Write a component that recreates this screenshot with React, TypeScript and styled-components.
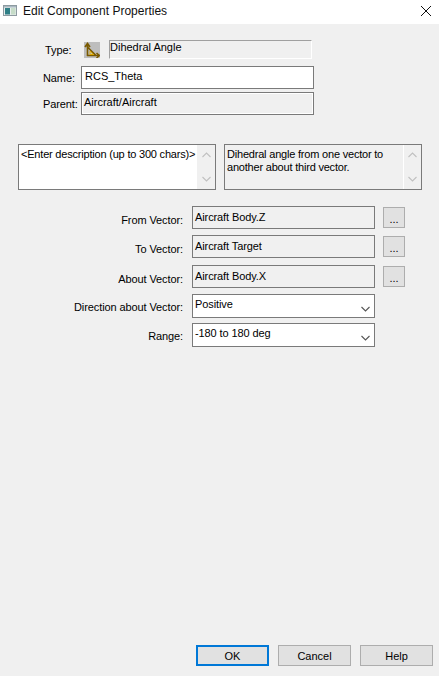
import styled, { createGlobalStyle } from 'styled-components';

const GlobalStyle = createGlobalStyle`
    html, body {
        margin: 0;
        padding: 0;
        background: #f0f0f0;
    }
    * {
        box-sizing: border-box;
    }
`;

const vectorRows = [
    { label: 'From Vector:', value: 'Aircraft Body.Z', gap: 0 },
    { label: 'To Vector:', value: 'Aircraft Target', gap: 6 },
    { label: 'About Vector:', value: 'Aircraft Body.X', gap: 7 },
];

const selectRows = [
    { label: 'Direction about Vector:', value: 'Positive', gap: 6 },
    { label: 'Range:', value: '-180 to 180 deg', gap: 5 },
];

const Chevron = ({ up, color }: { up?: boolean; color: string }) => (
    <svg width="9" height="6" viewBox="0 0 9 6" fill="none">
        <path d={up ? 'M0.5 5 L4.5 1 L8.5 5' : 'M0.5 1 L4.5 5 L8.5 1'} stroke={color} strokeWidth="1.1" />
    </svg>
);

const Scrollbar = ({ $disabled }: { $disabled?: boolean }) => (
    <ScrollTrack $disabled={$disabled}>
        <Chevron up color="#c0c0c0" />
        <Chevron color="#c0c0c0" />
    </ScrollTrack>
);

export default function App() {
    return (
        <>
            <GlobalStyle />
            <Page>
                <TitleBar>
                    <svg width="14" height="11" viewBox="0 0 14 11">
                        <rect x="0.5" y="0.5" width="13" height="10" fill="#e8eeee" stroke="#8d9aa0" />
                        <rect x="1" y="1" width="12" height="1.5" fill="#a9b8c0" />
                        <rect x="2" y="3" width="5" height="6.5" fill="#2f7f86" />
                        <rect x="8" y="3" width="4.5" height="6.5" fill="#c6dcc8" />
                    </svg>
                    <Title>Edit Component Properties</Title>
                    <CloseIcon width="10" height="10" viewBox="0 0 10 10">
                        <path d="M0 0 L10 10 M10 0 L0 10" stroke="#111" strokeWidth="1" fill="none" />
                    </CloseIcon>
                </TitleBar>

                <Content>
                    <TopRow $height={19}>
                        <TopLabel $indent={2}>Type:</TopLabel>
                        <TypeIcon>
                            <svg width="16" height="16" viewBox="0 0 16 16" fill="none">
                                <path d="M3.5 14 L3.5 2 M1 5 L3.5 1.5 L6 5 M3 13.5 L16 13.5 M12.5 11 L15.5 13.5 L12.5 16 M3.5 5 L12 13.5" stroke="#7a5a00" strokeWidth="1.6" />
                                <path d="M6 12.5 L6 9 L9.5 12.5 Z" stroke="#e0ac00" strokeWidth="1" />
                            </svg>
                        </TypeIcon>
                        <TypeBox>Dihedral Angle</TypeBox>
                    </TopRow>
                    <TopRow $height={23} $gap={7}>
                        <TopLabel>Name:</TopLabel>
                        <NameInput>RCS_Theta</NameInput>
                    </TopRow>
                    <TopRow $height={23} $gap={3}>
                        <TopLabel>Parent:</TopLabel>
                        <ParentBox>Aircraft/Aircraft</ParentBox>
                    </TopRow>

                    <Descriptions>
                        <DescriptionBox>
                            <DescriptionText>&lt;Enter description (up to 300 chars)&gt;</DescriptionText>
                            <Scrollbar />
                        </DescriptionBox>
                        <DescriptionBox $readOnly>
                            <DescriptionText>
                                Dihedral angle from one vector to
                                <br />
                                another about third vector.
                            </DescriptionText>
                            <Scrollbar $disabled />
                        </DescriptionBox>
                    </Descriptions>

                    <Fields>
                        {vectorRows.map((row) => (
                            <FieldRow key={row.label} $gap={row.gap} $height={23}>
                                <FieldLabel>{row.label}</FieldLabel>
                                <ValueBox>{row.value}</ValueBox>
                                <BrowseButton>...</BrowseButton>
                            </FieldRow>
                        ))}
                        {selectRows.map((row) => (
                            <FieldRow key={row.label} $gap={row.gap} $height={24}>
                                <FieldLabel $select>{row.label}</FieldLabel>
                                <SelectBox>
                                    {row.value}
                                    <Chevron color="#555" />
                                </SelectBox>
                            </FieldRow>
                        ))}
                    </Fields>
                </Content>

                <Footer>
                    <DialogButton $primary>OK</DialogButton>
                    <DialogButton>Cancel</DialogButton>
                    <DialogButton>Help</DialogButton>
                </Footer>
            </Page>
        </>
    );
}

const Page = styled.div`
    display: flex;
    flex-direction: column;
    height: 100vh;
    overflow: hidden;
    background: #f0f0f0;
    color: #000;
    font-family: 'Liberation Sans', Arial, sans-serif;
    font-size: 11px;
`;

const TitleBar = styled.div`
    display: flex;
    align-items: center;
    gap: 6px;
    height: 24px;
    flex: none;
    padding: 0 8px 3px 3px;
    background: #fff;
`;

const Title = styled.div`
    font-size: 12px;
    color: #111;
    flex: 1;
`;

const CloseIcon = styled.svg`
    flex: none;
`;

const Content = styled.div`
    flex: 1;
    display: flex;
    flex-direction: column;
    padding-top: 16px;
`;

const TopRow = styled.div<{ $height: number; $gap?: number }>`
    display: flex;
    align-items: center;
    height: ${(p) => p.$height}px;
    margin-top: ${(p) => p.$gap ?? 0}px;
    padding-left: 43px;
`;

const TopLabel = styled.div<{ $indent?: number }>`
    width: 38px;
    padding-left: ${(p) => p.$indent ?? 0}px;
    flex: none;
    letter-spacing: -0.1px;
`;

const TypeIcon = styled.div`
    display: flex;
    width: 16px;
    height: 16px;
    margin: 0 9px 0 3px;
    background: #bdbdbd;
    flex: none;
`;

const TypeBox = styled.div`
    width: 203px;
    height: 100%;
    padding: 0;
    background: #f0f0f0;
    border-style: solid;
    border-width: 1px;
    border-color: #a0a0a0 #fff #fff #a0a0a0;
    line-height: 13px;
`;

const NameInput = styled.div`
    width: 233px;
    height: 100%;
    padding-left: 3px;
    background: #fff;
    border: 1px solid #7a7a7a;
    line-height: 19px;
`;

const ParentBox = styled.div`
    width: 233px;
    height: 100%;
    padding: 2px;
    background: #f0f0f0;
    border: 1px solid #7a7a7a;
    box-shadow: inset 1px 1px 0 #fff, inset -1px -1px 0 #fff;
    line-height: 14px;
`;

const Descriptions = styled.div`
    display: flex;
    gap: 8px;
    margin-top: 29px;
    padding-left: 18px;
`;

const DescriptionBox = styled.div<{ $readOnly?: boolean }>`
    display: flex;
    width: 198px;
    height: 46px;
    background: ${(p) => (p.$readOnly ? '#f0f0f0' : '#fff')};
    border: 1px solid #7a7a7a;
`;

const DescriptionText = styled.div`
    flex: 1;
    min-width: 0;
    padding: 3px 0 0 2px;
    line-height: 13px;
    letter-spacing: -0.2px;
    white-space: nowrap;
`;

const ScrollTrack = styled.div<{ $disabled?: boolean }>`
    display: flex;
    flex-direction: column;
    justify-content: space-between;
    align-items: center;
    width: 18px;
    flex: none;
    padding: 7px 0 7px;
    background: #f0f0f0;
    border-left: ${(p) => (p.$disabled ? '1px solid #fff' : 'none')};
`;

const Fields = styled.div`
    display: flex;
    flex-direction: column;
    margin-top: 16px;
`;

const FieldRow = styled.div<{ $gap: number; $height: number }>`
    display: flex;
    align-items: center;
    height: ${(p) => p.$height}px;
    margin-top: ${(p) => p.$gap}px;
`;

const FieldLabel = styled.div<{ $select?: boolean }>`
    width: 183px;
    margin-right: 9px;
    padding-top: ${(p) => (p.$select ? 2 : 5)}px;
    text-align: right;
    flex: none;
    letter-spacing: -0.1px;
`;

const ValueBox = styled.div`
    width: 183px;
    height: 100%;
    padding: 3px 2px 0;
    background: #f0f0f0;
    border: 1px solid #7a7a7a;
    line-height: 14px;
    letter-spacing: -0.1px;
`;

const SelectBox = styled.div`
    display: flex;
    align-items: flex-start;
    justify-content: space-between;
    width: 183px;
    height: 100%;
    padding: 2px 4px 0 2px;
    background: #fff;
    border: 1px solid #7a7a7a;
    line-height: 14px;
    letter-spacing: -0.1px;

    svg {
        margin-top: 9px;
    }
`;

const BrowseButton = styled.div`
    display: flex;
    align-items: center;
    justify-content: center;
    width: 22px;
    height: 21px;
    margin-left: 8px;
    padding-top: 2px;
    background: #e1e1e1;
    border: 1px solid #adadad;
    font-size: 11px;
`;

const Footer = styled.div`
    display: flex;
    justify-content: flex-end;
    gap: 9px;
    flex: none;
    padding: 0 6px 10px 0;
`;

const DialogButton = styled.div<{ $primary?: boolean }>`
    display: flex;
    align-items: center;
    justify-content: center;
    width: 73px;
    height: 21px;
    background: #e1e1e1;
    border: ${(p) => (p.$primary ? '2px solid #0078d7' : '1px solid #adadad')};
`;
